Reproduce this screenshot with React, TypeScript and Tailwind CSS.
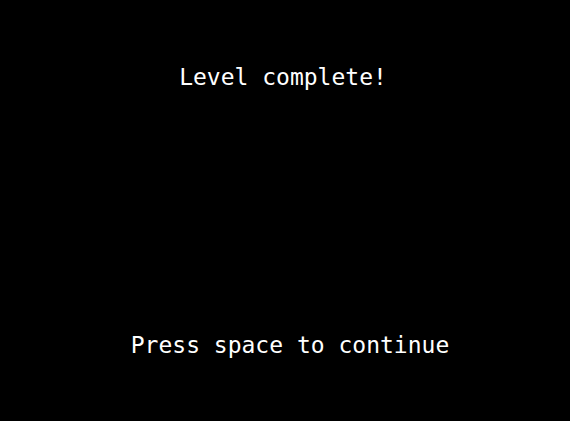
export default function App() {
  return (
    <div className="flex h-[421px] w-full flex-col bg-black text-white font-['DejaVu_Sans_Mono',monospace] text-[23px] leading-[28px]">
      <div className="mt-[63px] pr-[4px] text-center">Level complete!</div>
      <div className="mt-[240px] pl-[10px] text-center">Press space to continue</div>
    </div>
  )
}
